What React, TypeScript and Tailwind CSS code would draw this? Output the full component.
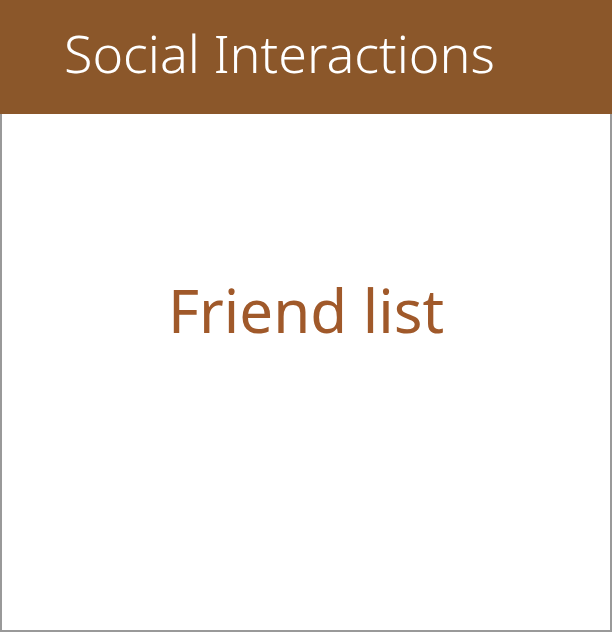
const App = () => {
  return (
    <div className="w-[612px] h-[632px] flex flex-col font-['Noto_Sans',sans-serif]">
      {/* Header */}
      <div className="h-[114px] bg-[#8b572a] flex items-center px-[64px] pb-[8px]">
        <h1 className="text-white text-[52px] font-light leading-none">Social Interactions</h1>
      </div>
      {/* Body */}
      <div className="flex-1 bg-white border-2 border-t-0 border-[#999] flex justify-center pt-[166px]">
        <p className="text-[#a0592a] text-[60px] leading-none">Friend list</p>
      </div>
    </div>
  );
};

export default App;
